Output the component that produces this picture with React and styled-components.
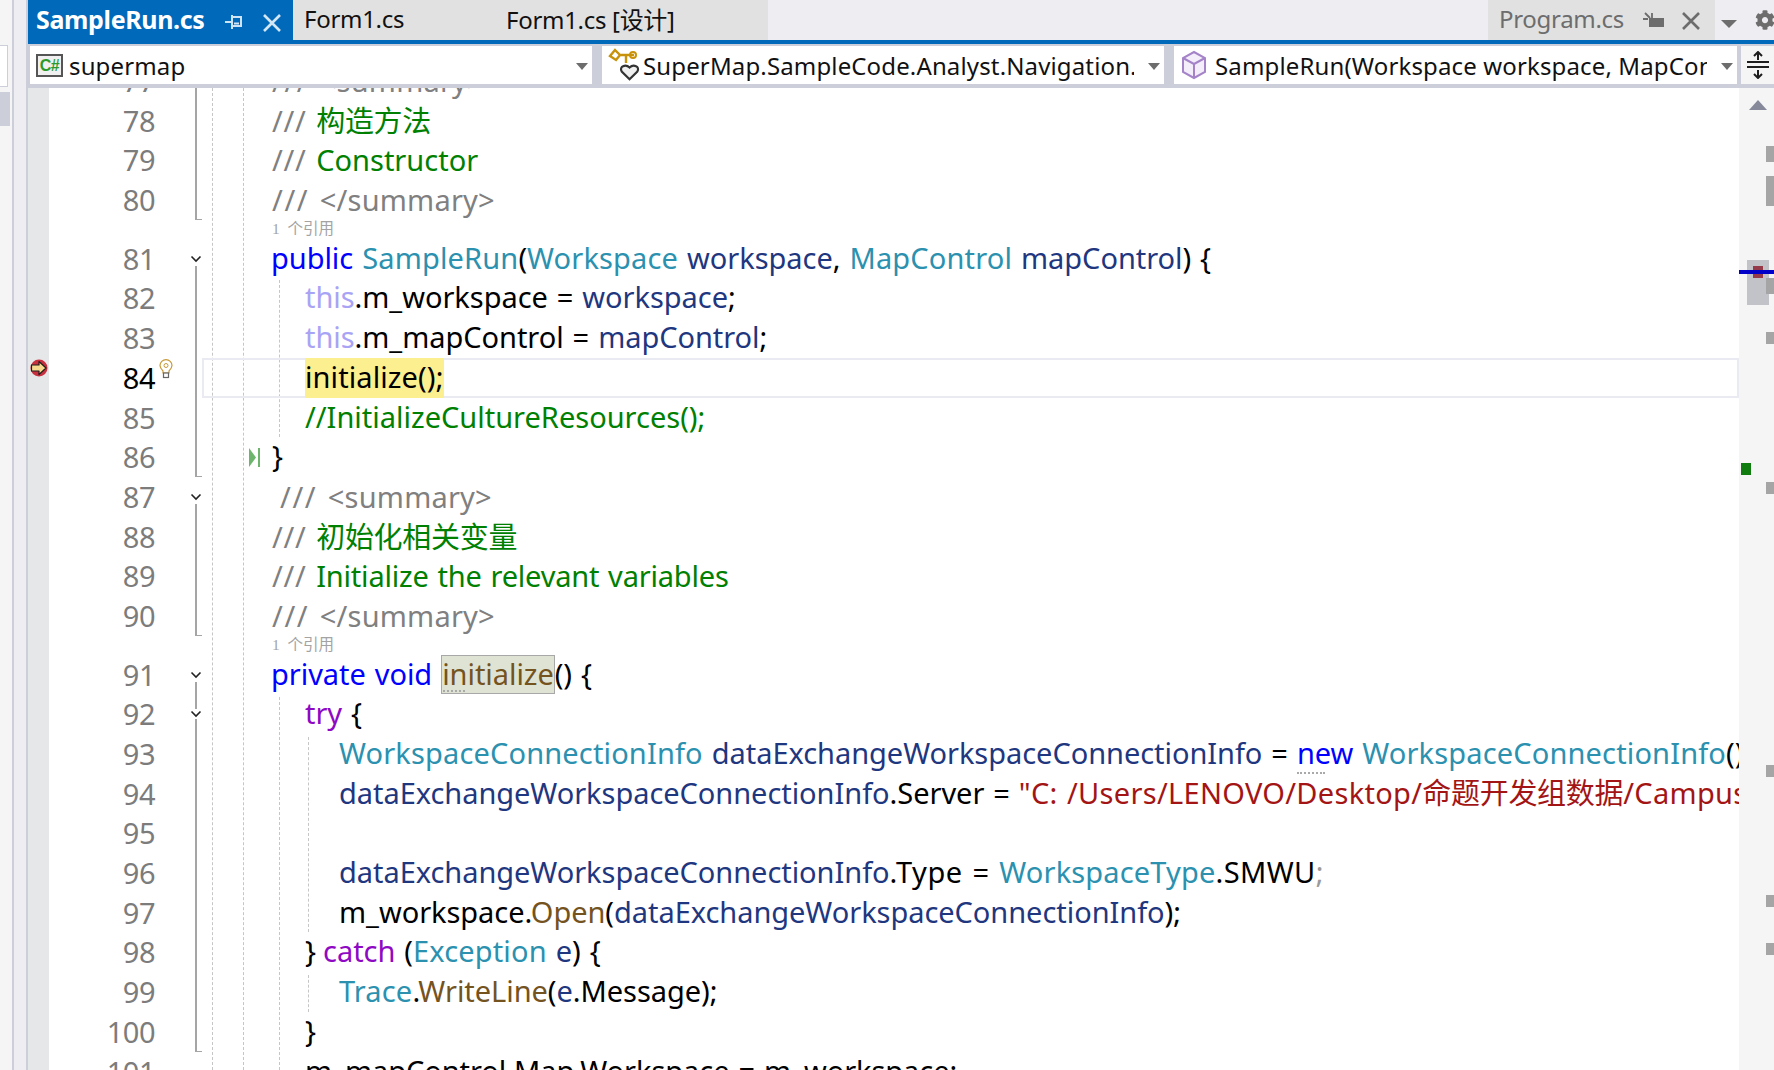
import React from "react";
import styled, { createGlobalStyle } from "styled-components";
import { FaCog } from "react-icons/fa";

const FONT = `"Noto Sans", "Noto Sans CJK SC", sans-serif`;
const ROW = 39.7;

const Global = createGlobalStyle`
  html, body { margin: 0; padding: 0; background: #fff; overflow: hidden; }
  * { box-sizing: border-box; }
`;

const Page = styled.div`
  width: 1774px; height: 1070px; display: flex; overflow: hidden;
  font-family: ${FONT}; background: #eeeef2;
`;

/* left dock */
const Dock = styled.div`
  width: 28px; flex: none; display: flex; border-right: 2px solid #ccced9; background: #eeeef2;
`;
const DockPanel = styled.div`
  width: 14px; flex: none; background: #f5f5f5; border-right: 2px solid #ccced9;
  display: flex; flex-direction: column; padding-top: 45px;
`;
const DockField = styled.div`
  width: 8px; height: 42px; background: #fff; border: 1px solid #ccced9; border-left: 0;
`;
const DockSelection = styled.div`
  width: 10px; height: 34px; margin-top: 5px; background: #ccced9;
`;

/* main column */
const Main = styled.div`
  flex: 1; min-width: 0; display: flex; flex-direction: column;
`;

/* tabs */
const TabStrip = styled.div`
  height: 44px; flex: none; display: flex; align-items: flex-start;
  background: #eeeef2; border-bottom: 4px solid #0069b9;
`;
const ActiveTab = styled.div`
  width: 265px; height: 40px; flex: none; display: flex; align-items: center;
  padding-left: 8px; background: #0069b9; color: #fff;
  font-size: 25px; font-weight: 700; letter-spacing: -0.35px;
`;
const TabLabel = styled.span`
  margin-top: -3px; white-space: pre;
`;
const TabIcon = styled.svg`
  flex: none; display: block; margin-left: ${(p) => p.$ml}px; margin-top: ${(p) => p.$mt || 0}px;
`;
const InactiveTab = styled.div`
  height: 40px; flex: none; width: ${(p) => p.$w}px; display: flex; align-items: center;
  padding-left: ${(p) => p.$pl}px; background: #e1e1e1;
  color: ${(p) => (p.$muted ? "#6d6d6d" : "#111")};
  font-size: 24px; letter-spacing: -0.3px;
`;
const TabSpacer = styled.div` flex: 1; `;
const OverflowArrow = styled.div`
  width: 0; height: 0; flex: none; margin: 20px 0 0 6px;
  border-left: 8px solid transparent; border-right: 8px solid transparent;
  border-top: 8px solid #6d6d6d;
`;
const GearSlot = styled.div`
  width: 37px; flex: none; height: 40px; display: flex; align-items: center;
  justify-content: flex-end; color: #6d6d6d; overflow: hidden;
  svg { flex: none; margin-right: -1px; }
`;

/* nav bar */
const NavBar = styled.div`
  height: 44px; flex: none; display: flex; gap: 10px; padding: 2px 0 4px 2px; background: #ccced9;
`;
const Combo = styled.div`
  width: ${(p) => p.$w}px; flex: none; height: 38px; background: #fff; display: flex; align-items: center;
  padding: 0 4px 0 6px; gap: 6px; font-size: 24px; letter-spacing: 0.14px; color: #111;
`;
const ComboText = styled.div`
  flex: 1; min-width: 0; overflow: hidden; white-space: nowrap; line-height: 40px; height: 38px;
`;
const ComboArrow = styled.div`
  flex: none; width: 0; height: 0; margin: 2px 0 0 8px;
  border-left: 6px solid transparent; border-right: 6px solid transparent;
  border-top: 7px solid #6d6d6d;
`;
const CsBadge = styled.div`
  width: 27px; height: 23px; flex: none; border: 2px solid #555; background: #f0f0f0; color: #2b9a2b;
  font: 700 16px/19px "Liberation Sans", sans-serif; letter-spacing: -0.5px; text-align: center;
`;
const SplitSlot = styled.div`
  flex: 1; margin-left: -6px; background: #f5f5f5; display: flex; align-items: center; justify-content: center;
`;

/* editor */
const Editor = styled.div`
  flex: 1; min-height: 0; display: flex; background: #fff;
`;
const CodePane = styled.div`
  flex: 1; min-width: 0; position: relative; overflow: hidden;
`;
const Rows = styled.div` margin-top: -27px; `;
const Row = styled.div`
  display: flex; height: ${(p) => (p.$lens ? 19 : ROW)}px;
`;
const IndicatorCell = styled.div`
  width: 21px; flex: none; background: #e6e7e8; display: flex; align-items: center; justify-content: center;
  svg { margin-bottom: 20px; }
`;
const LineNumber = styled.div`
  width: 106px; flex: none; text-align: right; font-size: 29px; letter-spacing: -0.5px;
  line-height: ${ROW}px; color: ${(p) => (p.$current ? "#000" : "#7c7c7c")};
`;
const GlyphCell = styled.div`
  width: 31px; flex: none; position: relative;
`;
const BulbIcon = styled.svg`
  position: absolute; left: 4px; top: 1px; display: block;
`;
const OutlineCell = styled.div`
  width: 16px; flex: none; position: relative;
  &::before {
    content: ""; position: absolute; left: 9px; width: 2px; background: #a5a5a5;
    display: ${(p) => (p.$kind === "none" ? "none" : "block")};
    top: ${(p) => (p.$kind === "start" ? "27px" : "0")};
    bottom: 0;
  }
  &::after {
    content: ""; position: absolute; left: 10px; bottom: 0; width: 6px; height: 1px; background: #a5a5a5;
    display: ${(p) => (p.$kind === "end" ? "block" : "none")};
  }
`;
const Chevron = styled.svg`
  position: absolute; left: 3px; top: 15px; background: #fff; display: block; z-index: 1;
`;
const CodeCell = styled.div`
  flex: 1; min-width: 0; position: relative; white-space: pre; overflow: hidden;
  padding-left: ${(p) => p.$pad}px; font-size: 29px; line-height: ${(p) => (p.$doc ? 40 : 38)}px;
  letter-spacing: -0.05px; word-spacing: 1.5px; color: #000;
  box-shadow: ${(p) => (p.$current ? "inset 0 0 0 2px #eaeaf2" : "none")};
  z-index: 1;
`;
const LensCell = styled.div`
  flex: 1; padding-left: 70px; white-space: pre; font-family: "Liberation Serif", "Noto Sans CJK SC", serif;
  font-size: 15.5px; line-height: 17px; color: #a3a3a3;
`;
const TOK = {
  kw: ["#0000ff"], type: ["#2b91af", "0.15px"], id: ["#1f377f", "-0.05px"], fn: ["#74531f"], self: ["#a9a3f5"],
  ctl: ["#8f08c4"], cm: ["#008000", "0px"], cmw: ["#008000", "-0.2px"], cjk: ["#008000", "-0.3px"], doc: ["#808080", "0.2px"],
  slash: ["#808080", "1.6px"], cslash: ["#808080", "0.7px"],
  str: ["#a31515", "0.3px"], strcjk: ["#a31515", "-0.3px"], dim: ["#9a9a9a"],
  wide: ["#000", "0.6px"], caps: ["#000", "0.4px"], tight: ["#000", "-1px"],
};
const Tok = styled.span`
  color: ${(p) => (TOK[p.$k] ? TOK[p.$k][0] : "#000")};
  letter-spacing: ${(p) => (TOK[p.$k] && TOK[p.$k][1]) || "inherit"};
`;
const YellowMark = styled.span`
  display: inline-block; height: 40px; background: #fbef8f; vertical-align: top; letter-spacing: 0.1px;
`;
const RefMark = styled.span`
  display: inline-block; height: 39px; line-height: 38px; vertical-align: top; position: relative;
  background: #dfe3d3; box-shadow: inset 0 0 0 1px #a8a8a8; color: #74531f; padding: 0 1px;
  &::after { content: ""; position: absolute; left: 2px; bottom: 2px; width: 22px; border-bottom: 2px dotted #a9a9a9; }
`;
const DotsMark = styled.span`
  position: relative; color: #0000ff;
  &::after { content: ""; position: absolute; left: 0; bottom: -2px; width: 28px; border-bottom: 2px dotted #a9a9a9; }
`;
const ChangeMark = styled.svg`
  position: absolute; left: 46px; top: 11px; display: block;
`;
const Guide = styled.div`
  position: absolute; left: ${(p) => p.$x - 28}px; top: ${(p) => p.$y - 88}px; height: ${(p) => p.$h}px; width: 0;
  border-left: 1px dashed #c6c6c6; z-index: 0;
`;

/* scrollbar */
const ScrollTrack = styled.div`
  width: 35px; flex: none; position: relative; background: #f5f5f5;
`;
const UpArrow = styled.div`
  position: absolute; left: 10px; top: 12px; width: 0; height: 0;
  border-left: 9px solid transparent; border-right: 9px solid transparent; border-bottom: 10px solid #868999;
`;
const Thumb = styled.div`
  position: absolute; left: 8px; top: 172px; width: 22px; height: 45px; background: #c2c3c9;
`;
const Mark = styled.div`
  position: absolute; right: 0; top: ${(p) => p.$y - 88}px; width: 8px; height: ${(p) => p.$h}px; background: #a5a5a5;
`;
const Caret = styled.div`
  position: absolute; left: 14px; top: 178px; width: 10px; height: 12px; background: #943a48;
`;
const BlueLine = styled.div`
  position: absolute; left: 0; right: 0; top: 182px; height: 4px; background: #0000c8;
`;
const GreenMark = styled.div`
  position: absolute; left: 2px; top: 375px; width: 10px; height: 12px; background: #107c10;
`;

const Chev = () => (
  <Chevron width="14" height="10" viewBox="0 0 14 10">
    <path d="M2.5 2.5 L7 7 L11.5 2.5" fill="none" stroke="#222" strokeWidth="1.6" />
  </Chevron>
);

const DATA = "dataExchangeWorkspaceConnectionInfo";

const lines = [
  { n: 77, o: "line", pad: 70, doc: true, t: [["slash", "/// "], ["doc", "<summary>"]] },
  { n: 78, o: "line", pad: 70, doc: true, t: [["cslash", "/// "], ["cjk", "构造方法"]] },
  { n: 79, o: "line", pad: 70, doc: true, t: [["cslash", "/// "], ["cm", "Constructor"]] },
  { n: 80, o: "end", pad: 70, doc: true, t: [["slash", "/// "], ["doc", "</summary>"]] },
  { lens: true },
  { n: 81, o: "start", pad: 69, t: [["kw", "public"], ["", " "], ["type", "SampleRun"], ["", "("], ["type", "Workspace"], ["", " "], ["id", "workspace"], ["", ", "], ["type", "MapControl"], ["", " "], ["id", "mapControl"], ["", ") {"]] },
  { n: 82, o: "line", pad: 103, t: [["self", "this"], ["", ".m_workspace = "], ["id", "workspace"], ["", ";"]] },
  { n: 83, o: "line", pad: 103, t: [["self", "this"], ["", ".m_mapControl = "], ["id", "mapControl"], ["", ";"]] },
  { n: 84, o: "line", pad: 103, current: true, yellow: "initialize();" },
  { n: 85, o: "line", pad: 103, t: [["cm", "//InitializeCultureResources();"]] },
  { n: 86, o: "end", pad: 70, change: true, t: [["", "}"]] },
  { n: 87, o: "start", pad: 78, doc: true, t: [["slash", "/// "], ["doc", "<summary>"]] },
  { n: 88, o: "line", pad: 70, doc: true, t: [["cslash", "/// "], ["cjk", "初始化相关变量"]] },
  { n: 89, o: "line", pad: 70, doc: true, t: [["cslash", "/// "], ["cmw", "Initialize the relevant variables"]] },
  { n: 90, o: "end", pad: 70, doc: true, t: [["slash", "/// "], ["doc", "</summary>"]] },
  { lens: true },
  { n: 91, o: "start", pad: 69, t: [["kw", "private void"], ["", " "], ["ref", "initialize"], ["", "() {"]] },
  { n: 92, o: "mid", pad: 103, t: [["ctl", "try"], ["", " {"]] },
  { n: 93, o: "line", pad: 137, t: [["type", "WorkspaceConnectionInfo"], ["", " "], ["id", DATA], ["", " = "], ["dots", "new"], ["", " "], ["type", "WorkspaceConnectionInfo"], ["", "();"]] },
  { n: 94, o: "line", pad: 137, t: [["id", DATA], ["", ".Server = "], ["str", "\"C: /Users/LENOVO/Desktop/"], ["strcjk", "命题开发组数据"], ["str", "/CampusNetwork/Campus.smwu\";"]] },
  { n: 95, o: "line", pad: 137, t: [] },
  { n: 96, o: "line", pad: 137, t: [["id", DATA], ["wide", ".Type = "], ["type", "WorkspaceType"], ["caps", ".SMWU"], ["dim", ";"]] },
  { n: 97, o: "line", pad: 137, t: [["", "m_workspace."], ["fn", "Open"], ["", "("], ["id", DATA], ["", ");"]] },
  { n: 98, o: "line", pad: 103, t: [["tight", "} "], ["ctl", "catch"], ["", " ("], ["type", "Exception"], ["", " "], ["id", "e"], ["", ") {"]] },
  { n: 99, o: "line", pad: 137, t: [["type", "Trace"], ["", "."], ["fn", "WriteLine"], ["", "("], ["id", "e"], ["", ".Message);"]] },
  { n: 100, o: "end", pad: 103, t: [["", "}"]] },
  { n: 101, o: "none", pad: 103, t: [["", "m_mapControl.Map.Workspace = m_workspace;"]] },
];

const guides = [
  { x: 212, y: 88, h: 982 },
  { x: 243, y: 88, h: 982 },
  { x: 279, y: 280, h: 157 },
  { x: 279, y: 697, h: 373 },
  { x: 308, y: 737, h: 195 },
  { x: 308, y: 975, h: 37 },
];

const marks = [[146, 16], [176, 30], [278, 16], [332, 12], [482, 12], [765, 12], [895, 12], [943, 12]];

function renderToken([k, s], i) {
  if (k === "ref") return <RefMark key={i}>{s}</RefMark>;
  if (k === "dots") return <DotsMark key={i}>{s}</DotsMark>;
  return <Tok key={i} $k={k}>{s}</Tok>;
}

function CodeRow({ line }) {
  if (line.lens) {
    return (
      <Row $lens>
        <IndicatorCell />
        <LineNumber />
        <GlyphCell />
        <OutlineCell $kind="none" />
        <LensCell>1  个引用</LensCell>
      </Row>
    );
  }
  const { n, o, pad, t, current, yellow, change, doc } = line;
  return (
    <Row>
      <IndicatorCell>
        {current && (
          <svg width="18" height="18" viewBox="0 0 18 18">
            <circle cx="9" cy="9" r="8.5" fill="#c8303f" />
            <path d="M1.5 6 H9 V2.5 L16 9 L9 15.5 V12 H1.5 Z" fill="#f6d98c" stroke="#1e1e1e" strokeWidth="1.2" strokeLinejoin="round" />
          </svg>
        )}
      </IndicatorCell>
      <LineNumber $current={current}>{n}</LineNumber>
      <GlyphCell>
        {current && (
          <BulbIcon width="14" height="20" viewBox="0 0 14 20">
            <path d="M4 12 C2 10 1 8.5 1 6.5 A6 5.8 0 0 1 13 6.5 C13 8.5 12 10 10 12 V14 H4 Z" fill="#fff" stroke="#c79a3a" strokeWidth="1.2" />
            <circle cx="7" cy="6.5" r="2" fill="none" stroke="#c79a3a" strokeWidth="1" />
            <rect x="4.5" y="14" width="5" height="4.5" fill="#fff" stroke="#666" strokeWidth="1.2" />
          </BulbIcon>
        )}
      </GlyphCell>
      <OutlineCell $kind={o}>{(o === "start" || o === "mid") && <Chev />}</OutlineCell>
      <CodeCell $pad={pad} $current={current} $doc={doc}>
        {change && (
          <ChangeMark width="16" height="19" viewBox="0 0 16 19">
            <path d="M1 0 L8 9.5 L1 19 Z" fill="#6db56d" />
            <rect x="10" y="0" width="2" height="19" fill="#6db56d" />
          </ChangeMark>
        )}
        {yellow ? <YellowMark>{yellow}</YellowMark> : t.map(renderToken)}
      </CodeCell>
    </Row>
  );
}

export default function App() {
  return (
    <Page>
      <Global />
      <Dock>
        <DockPanel>
          <DockField />
          <DockSelection />
        </DockPanel>
      </Dock>
      <Main>
        <TabStrip>
          <ActiveTab>
            <TabLabel>SampleRun.cs</TabLabel>
            <TabIcon $ml={21} $mt={4} width="17" height="16" viewBox="0 0 17 16">
              <path d="M0 8 H6 M7 1 V15 M7 3 H16 V12 H7 M9 9.5 H14" fill="none" stroke="#cfe5f5" strokeWidth="2" />
            </TabIcon>
            <TabIcon $ml={20} $mt={6} width="20" height="18" viewBox="0 0 20 18">
              <path d="M2 1 L18 17 M18 1 L2 17" fill="none" stroke="#d3e7f6" strokeWidth="2.6" />
            </TabIcon>
          </ActiveTab>
          <InactiveTab $w={202} $pl={11}><TabLabel>Form1.cs</TabLabel></InactiveTab>
          <InactiveTab $w={273} $pl={11}><TabLabel>Form1.cs [设计]</TabLabel></InactiveTab>
          <TabSpacer />
          <InactiveTab $w={227} $pl={11} $muted>
            <TabLabel>Program.cs</TabLabel>
            <TabIcon $ml={19} width="21" height="16" viewBox="0 0 21 16">
              <rect x="6" y="6" width="15" height="9" fill="#6d6d6d" />
              <path d="M0 7 H5 M9 1 V6 M2 1 L7 6" fill="none" stroke="#6d6d6d" strokeWidth="1.8" />
            </TabIcon>
            <TabIcon $ml={17} $mt={2} width="20" height="18" viewBox="0 0 20 18">
              <path d="M2 1 L18 17 M18 1 L2 17" fill="none" stroke="#6d6d6d" strokeWidth="2.6" />
            </TabIcon>
          </InactiveTab>
          <OverflowArrow />
          <GearSlot><FaCog size={20} /></GearSlot>
        </TabStrip>
        <NavBar>
          <Combo $w={562}>
            <CsBadge>C#</CsBadge>
            <ComboText>supermap</ComboText>
            <ComboArrow />
          </Combo>
          <Combo $w={562}>
            <svg width="32" height="34" viewBox="0 0 32 34" style={{ flex: "none", marginRight: -3 }}>
              <path d="M2 8 L7 2 L12 7 L8 12 Z M12 7 H26 M18 7 V15" fill="none" stroke="#c8920a" strokeWidth="2.4" />
              <circle cx="25" cy="7" r="3" fill="none" stroke="#c8920a" strokeWidth="2" />
              <path d="M23 33 L15 25 C12 20 19 17 23 21 C27 17 34 20 31 25 Z" transform="translate(-1 -1) scale(0.98)" fill="#f0f0f0" stroke="#333" strokeWidth="2.2" />
            </svg>
            <ComboText>SuperMap.SampleCode.Analyst.Navigation.</ComboText>
            <ComboArrow />
          </Combo>
          <Combo $w={563}>
            <svg width="26" height="30" viewBox="0 0 26 30" style={{ flex: "none", margin: "0 2px 0 1px" }}>
              <path d="M13 2 L24 8 V22 L13 28 L2 22 V8 Z" fill="#f3eef9" stroke="#a583c8" strokeWidth="2" />
              <path d="M2 8 L13 14 L24 8 M13 14 V28" fill="none" stroke="#a583c8" strokeWidth="2" />
            </svg>
            <ComboText>SampleRun(Workspace workspace, MapControl mapControl)</ComboText>
            <ComboArrow />
          </Combo>
          <SplitSlot>
            <svg width="24" height="28" viewBox="0 0 24 28">
              <path d="M1 11 H23 M1 16 H23" stroke="#1e1e1e" strokeWidth="2" />
              <path d="M12 1 V9 M12 19 V27" stroke="#1e1e1e" strokeWidth="2" />
              <path d="M8 5 L12 1 L16 5 M8 23 L12 27 L16 23" fill="none" stroke="#1e1e1e" strokeWidth="2" />
            </svg>
          </SplitSlot>
        </NavBar>
        <Editor>
          <CodePane>
            {guides.map((g, i) => <Guide key={i} $x={g.x} $y={g.y} $h={g.h} />)}
            <Rows>
              {lines.map((l, i) => <CodeRow key={i} line={l} />)}
            </Rows>
          </CodePane>
          <ScrollTrack>
            <UpArrow />
            <Thumb />
            {marks.map(([y, h]) => <Mark key={y} $y={y} $h={h} />)}
            <Caret />
            <BlueLine />
            <GreenMark />
          </ScrollTrack>
        </Editor>
      </Main>
    </Page>
  );
}
